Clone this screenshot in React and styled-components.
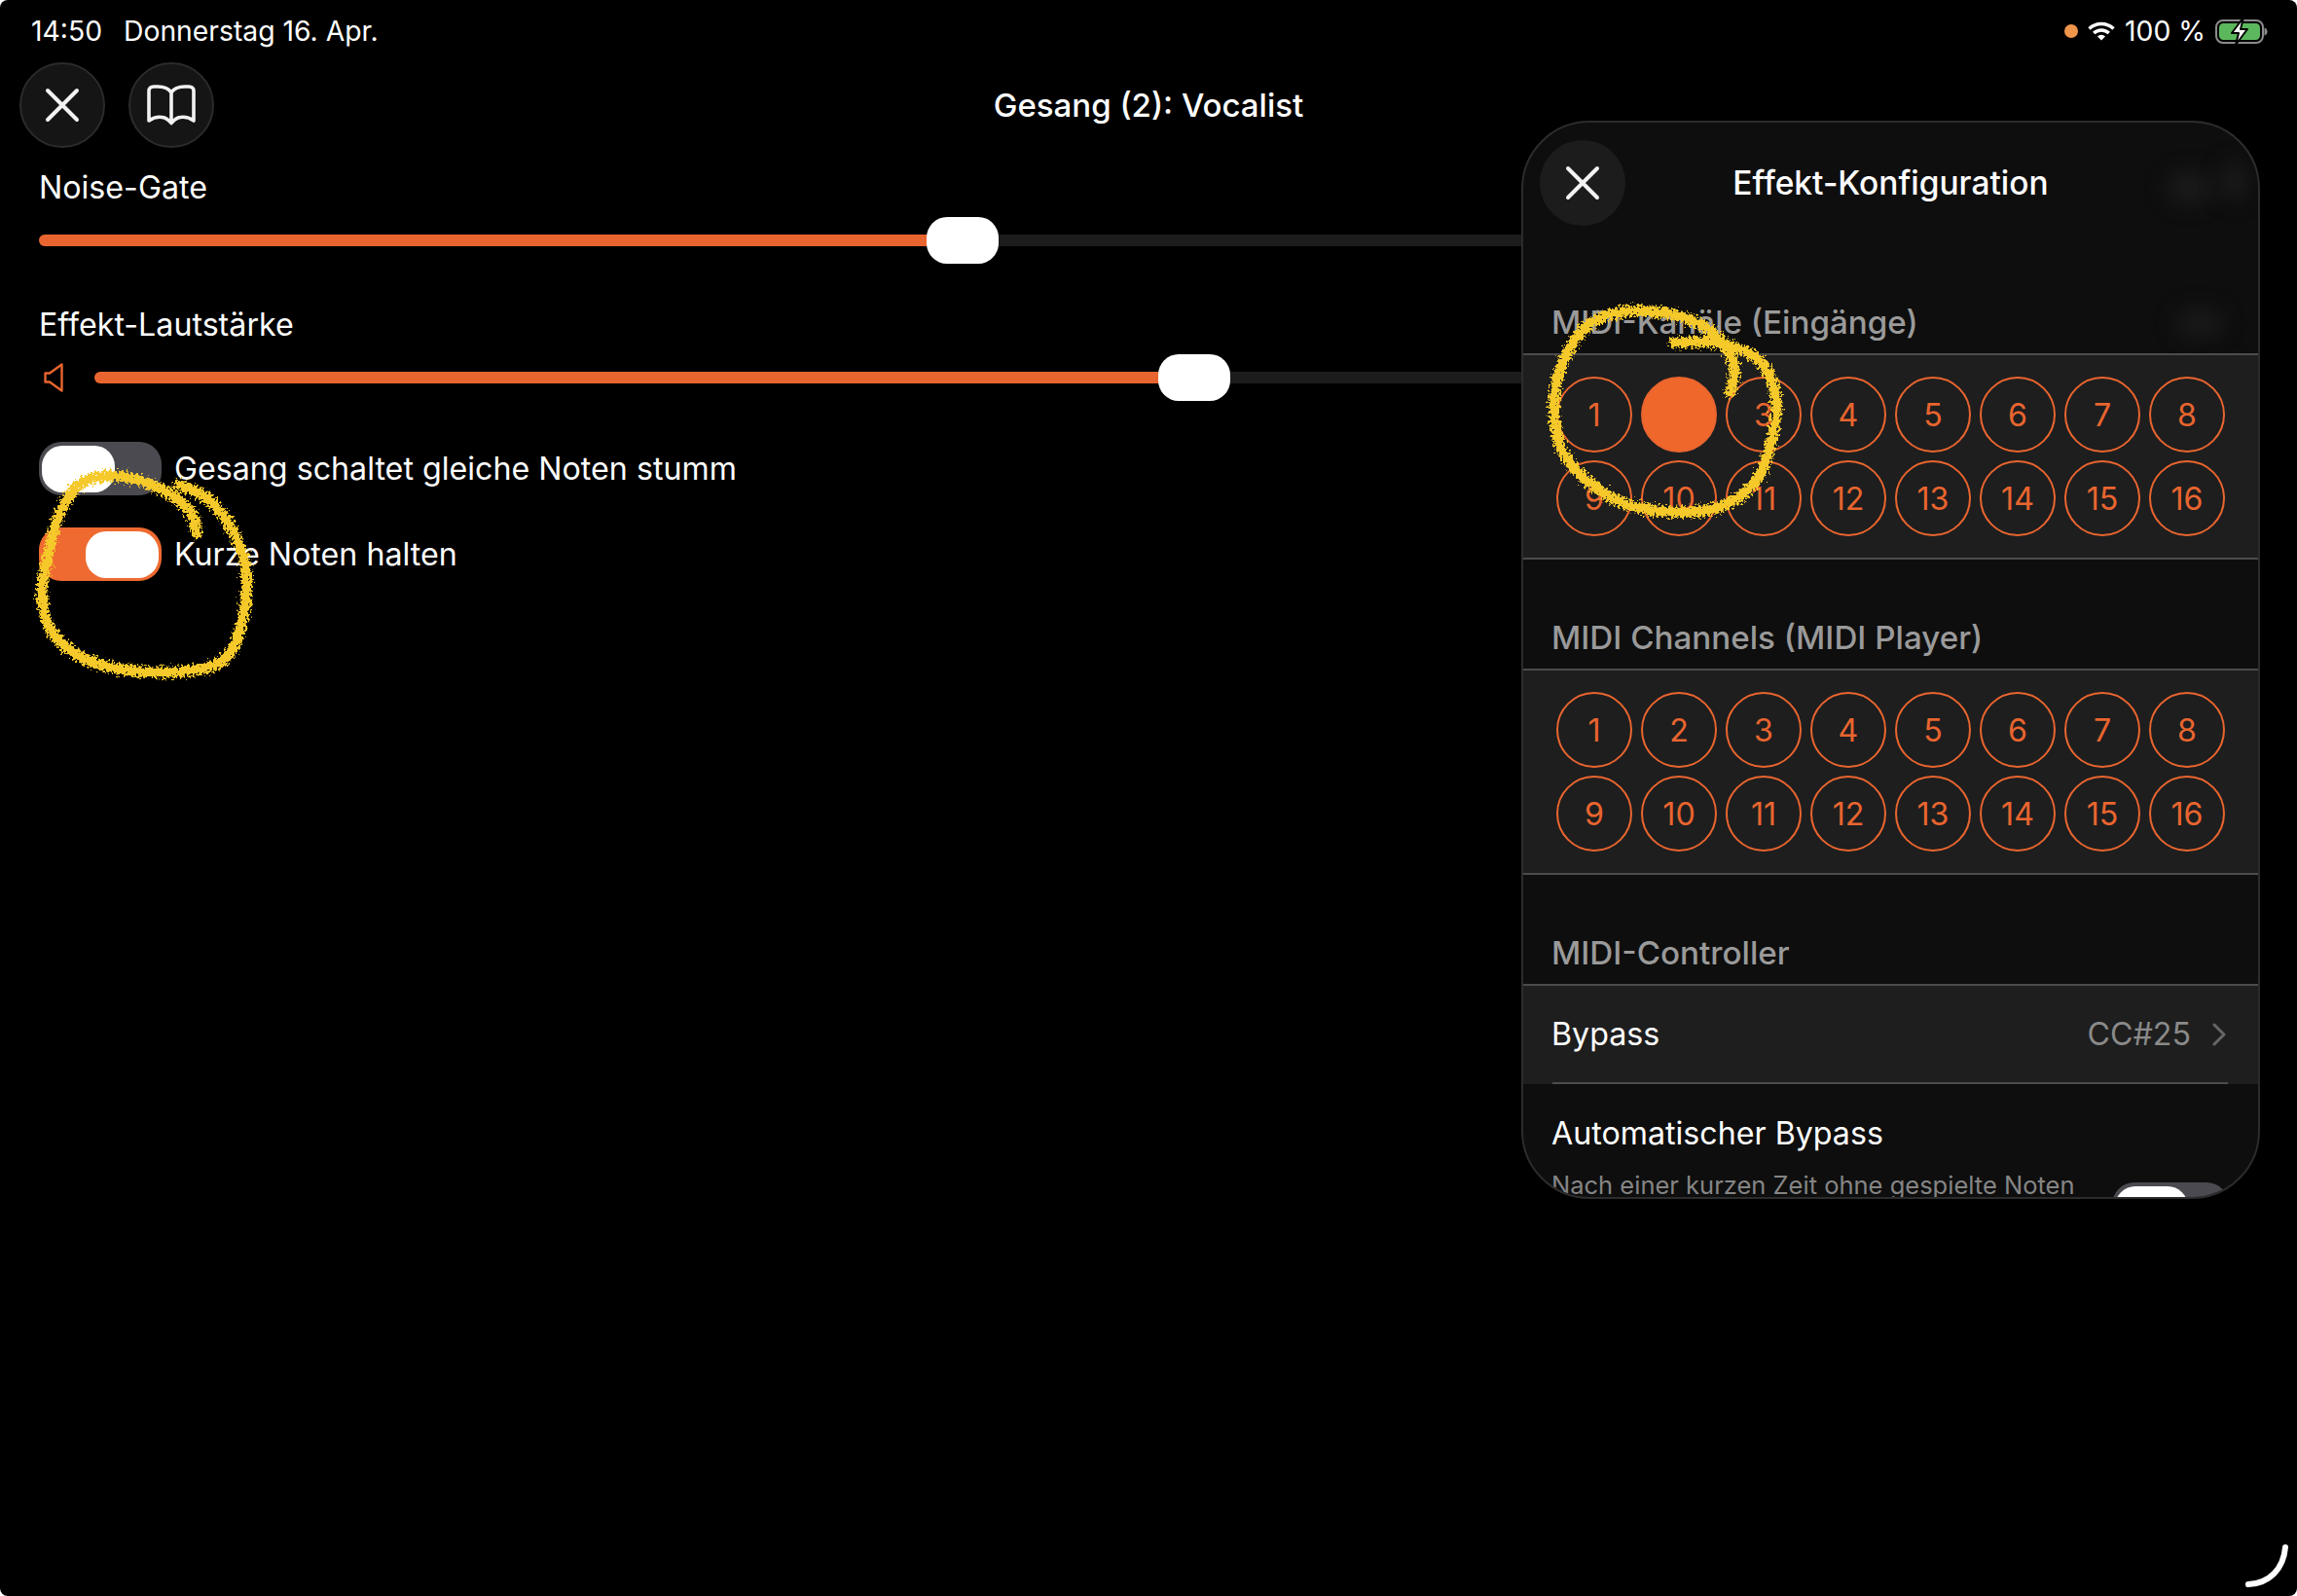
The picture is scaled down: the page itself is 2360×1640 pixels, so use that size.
import React from 'react';
import styled, { createGlobalStyle } from 'styled-components';

const ORANGE = '#e9652f';

const GlobalStyle = createGlobalStyle`
	html, body {
		margin: 0;
		padding: 0;
		background: #fff;
	}
	* {
		box-sizing: border-box;
	}
`;

const Page = styled.div`
	position: relative;
	width: 2360px;
	height: 1640px;
	overflow: hidden;
	background: #000;
	border-radius: 8px;
	color: #fff;
	font-family: Inter, "Noto Sans", "Liberation Sans", sans-serif;
	font-size: 32.2px;
`;

const StatusBar = styled.div`
	display: flex;
	align-items: center;
	justify-content: space-between;
	height: 64px;
	padding: 0 30px 0 32px;
	font-size: 28.3px;
`;

const StatusGroup = styled.div`
	display: flex;
	align-items: center;
	gap: ${p => p.$gap}px;
`;

const Dot = styled.div`
	width: 14px;
	height: 14px;
	border-radius: 50%;
	background: #f0964a;
`;

const NavBar = styled.div`
	display: grid;
	grid-template-columns: 1fr auto 1fr;
	align-items: center;
	height: 88px;
	padding: 0 20px;
`;

const NavButtons = styled.div`
	display: flex;
	gap: 24px;
`;

const RoundButton = styled.div`
	display: flex;
	align-items: center;
	justify-content: center;
	width: 88px;
	height: 88px;
	border-radius: 50%;
	background: ${p => p.$flat ? '#1c1c1c' : '#151515'};
	border: ${p => p.$flat ? 'none' : '2px solid #2b2b2b'};
`;

const Title = styled.div`
	font-weight: 500;
	font-size: 33px;
	line-height: 40px;
`;

const Content = styled.div`
	padding: 21px 40px 0;
`;

const Label = styled.div`
	height: 40px;
	line-height: 40px;
`;

const SliderRow = styled.div`
	display: flex;
	align-items: center;
	height: 48px;
	margin-top: 10px;
	margin-bottom: 43px;
`;

const SpeakerBox = styled.div`
	display: flex;
	align-items: center;
	width: 57px;
	padding-left: 5px;
`;

const Track = styled.div`
	flex: 1;
	height: 12px;
	border-radius: 6px;
	background: #1c1c1c;
`;

const Fill = styled.div`
	position: relative;
	width: ${p => p.$width}px;
	height: 12px;
	border-radius: 6px 0 0 6px;
	background: ${ORANGE};
`;

const Thumb = styled.div`
	position: absolute;
	top: -18px;
	right: -37px;
	width: 74px;
	height: 48px;
	border-radius: 21px;
	background: #fff;
`;

const ToggleList = styled.div`
	display: flex;
	flex-direction: column;
	gap: 33px;
	margin-top: -1px;
`;

const ToggleRow = styled.div`
	display: flex;
	align-items: center;
	gap: 13px;
`;

const Toggle = styled.div`
	display: flex;
	justify-content: ${p => p.$on ? 'flex-end' : 'flex-start'};
	align-items: center;
	flex-shrink: 0;
	width: 126px;
	height: 55px;
	padding: 0 3px;
	border-radius: 23px;
	background: ${p => p.$on ? '#ee6a30' : '#4a4a50'};
`;

const ToggleKnob = styled.div`
	width: 75px;
	height: 48px;
	border-radius: 21px;
	background: #fff;
`;

const Panel = styled.div`
	position: absolute;
	left: 1563px;
	top: 124px;
	width: 759px;
	height: 1108px;
	overflow: hidden;
	background: #0e0e0e;
	border: 2px solid #2c2c2c;
	border-radius: 70px;
`;

const Blob = styled.div`
	position: absolute;
	left: ${p => p.$x}px;
	top: ${p => p.$y}px;
	width: ${p => p.$w}px;
	height: ${p => p.$h}px;
	border-radius: 50%;
	background: ${p => p.$color};
	filter: blur(10px);
`;

const PanelHeader = styled.div`
	position: relative;
	display: flex;
	align-items: center;
	justify-content: center;
	height: 88px;
	margin: 18px 0 19px;
	font-size: 33.5px;
	font-weight: 500;
`;

const PanelClose = styled.div`
	position: absolute;
	left: 17px;
	top: 0;
`;

const SectionLabel = styled.div`
	height: 112px;
	padding: 60px 0 0 29px;
	line-height: 40px;
	font-size: 33.2px;
	font-weight: 500;
	color: #9a9a9a;
`;

const Card = styled.div`
	position: relative;
	background: #1e1e1e;
	border-top: 2px solid #4c4c4c;
	border-bottom: 2px solid ${p => p.$inset ? 'transparent' : '#4c4c4c'};
`;

const ChannelGrid = styled.div`
	display: grid;
	grid-template-columns: repeat(8, 78px);
	grid-auto-rows: 78px;
	justify-content: center;
	column-gap: 9px;
	row-gap: 8px;
	padding: 22px 0;
`;

const Channel = styled.div`
	display: flex;
	align-items: center;
	justify-content: center;
	border-radius: 50%;
	border: 2px solid ${ORANGE};
	background: ${p => p.$active ? '#f0672c' : 'transparent'};
	color: ${ORANGE};
`;

const BypassRow = styled.div`
	display: flex;
	align-items: center;
	justify-content: space-between;
	height: 99px;
	padding: 0 33px 0 29px;
`;

const BypassValue = styled.div`
	display: flex;
	align-items: center;
	gap: 22px;
	color: #8a8a8a;
`;

const InsetLine = styled.div`
	position: absolute;
	left: 30px;
	right: 31px;
	bottom: -2px;
	height: 2px;
	background: #4c4c4c;
`;

const AutoRow = styled.div`
	display: flex;
	align-items: flex-start;
	justify-content: space-between;
	padding: 31px 30px 0 29px;
`;

const AutoText = styled.div`
	display: flex;
	flex-direction: column;
	gap: 17px;
`;

const AutoHint = styled.div`
	font-size: 25.5px;
	line-height: 34px;
	color: #858585;
`;

const AutoToggle = styled(Toggle)`
	width: 120px;
	margin-top: 70px;
`;

const Overlay = styled.svg`
	position: absolute;
	left: 0;
	top: 0;
	pointer-events: none;
`;

const CloseIcon = () => (
	<svg width="36" height="36" viewBox="0 0 36 36" fill="none" stroke="#f2f2f2" strokeWidth="4" strokeLinecap="round">
		<path d="M3 3L33 33M33 3L3 33" />
	</svg>
);

const BookIcon = () => (
	<svg width="50" height="42" viewBox="0 0 50 42" fill="none" stroke="#f2f2f2" strokeWidth="3.6" strokeLinecap="round" strokeLinejoin="round">
		<path d="M25 8C22 3.5 17 2 11 2H7C4 2 2 3.5 2 6.5V37C7 33.5 13 32.5 18 34C21 35 23 37 25 39.5C27 37 29 35 32 34C37 32.5 43 33.5 48 37V6.5C48 3.5 46 2 43 2H39C33 2 28 3.5 25 8V39" />
	</svg>
);

const SpeakerIcon = () => (
	<svg width="20" height="30" viewBox="0 0 20 30" fill="none" stroke={ORANGE} strokeWidth="2.4" strokeLinejoin="round">
		<path d="M18.5 1.5L6 10.5H1.5V19.5H6L18.5 28.5Z" />
	</svg>
);

const WifiIcon = () => (
	<svg width="28" height="20" viewBox="0 0 28 20" fill="none" stroke="#fff" strokeWidth="3.4">
		<path d="M1.5 7.5A18 18 0 0 1 26.5 7.5" />
		<path d="M6.2 12A11.5 11.5 0 0 1 21.8 12" />
		<path d="M14 19.5L10 15.5A5.6 5.6 0 0 1 18 15.5Z" fill="#fff" stroke="none" />
	</svg>
);

const BatteryIcon = () => (
	<svg width="54" height="30" viewBox="0 0 54 30" fill="none">
		<rect x="1" y="4" width="48" height="23" rx="7" stroke="#8c8c8c" strokeWidth="2" />
		<rect x="4" y="7" width="42" height="17" rx="4.5" fill="#5cb85c" />
		<path d="M50.5 11.5C52.5 12 53.5 13.5 53.5 15.5C53.5 17.5 52.5 19 50.5 19.5Z" fill="#8c8c8c" />
		<path d="M29 1L17 17H24L21 29L33 13H26Z" fill="#fff" stroke="#000" strokeWidth="2" strokeLinejoin="round" />
	</svg>
);

const ChevronIcon = () => (
	<svg width="14" height="24" viewBox="0 0 14 24" fill="none" stroke="#666" strokeWidth="3" strokeLinecap="round" strokeLinejoin="round">
		<path d="M2 2L12 12L2 22" />
	</svg>
);

// smooth line through hand-picked points (catmull-rom)
const smooth = (pts) => {
	let d = `M${pts[0][0]} ${pts[0][1]}`;
	for (let i = 0; i < pts.length - 1; i++) {
		const p0 = pts[i - 1] || pts[i];
		const p1 = pts[i];
		const p2 = pts[i + 1];
		const p3 = pts[i + 2] || p2;
		const c1 = [p1[0] + (p2[0] - p0[0]) / 6, p1[1] + (p2[1] - p0[1]) / 6];
		const c2 = [p2[0] - (p3[0] - p1[0]) / 6, p2[1] - (p3[1] - p1[1]) / 6];
		d += `C${c1[0]} ${c1[1]} ${c2[0]} ${c2[1]} ${p2[0]} ${p2[1]}`;
	}
	return d;
};

const SCRIBBLE_TOGGLE = [[202, 548], [196, 527], [173, 507], [138, 492], [102, 490], [77, 502], [59, 533], [48, 577], [43, 613], [54, 650], [87, 677], [143, 690], [204, 688], [235, 673], [250, 633], [253, 587], [240, 547], [214, 513], [184, 498]];
const SCRIBBLE_CHANNEL = [[1778, 403], [1782, 377], [1770, 353], [1750, 335], [1717, 323], [1670, 320], [1633, 333], [1610, 363], [1598, 400], [1598, 437], [1607, 467], [1630, 493], [1663, 515], [1703, 525], [1750, 525], [1783, 513], [1807, 490], [1820, 453], [1825, 413], [1817, 383], [1797, 363], [1760, 352], [1720, 352]];

const Scribbles = () => (
	<Overlay width="2360" height="1640" viewBox="0 0 2360 1640" fill="none">
		<defs>
			<filter id="rough" x="0" y="0" width="2360" height="1640" filterUnits="userSpaceOnUse" colorInterpolationFilters="sRGB">
				<feTurbulence type="fractalNoise" baseFrequency="0.4" numOctaves="2" seed="4" />
				<feDisplacementMap in="SourceGraphic" scale="14" xChannelSelector="R" yChannelSelector="G" />
			</filter>
		</defs>
		<g filter="url(#rough)" stroke="#f5c92a" strokeWidth="11" strokeLinecap="round" strokeLinejoin="round">
			<path d={smooth(SCRIBBLE_TOGGLE)} />
			<path d={smooth(SCRIBBLE_CHANNEL)} />
		</g>
		<path d="M2348 1590C2346 1612 2332 1627 2310 1628" stroke="#fff" strokeWidth="6" strokeLinecap="round" />
	</Overlay>
);

const Slider = ({ fill, icon }) => (
	<SliderRow>
		{icon && <SpeakerBox><SpeakerIcon /></SpeakerBox>}
		<Track>
			<Fill $width={fill}><Thumb /></Fill>
		</Track>
	</SliderRow>
);

const Channels = ({ active }) => (
	<Card>
		<ChannelGrid>
			{Array.from({ length: 16 }, (_, i) => i + 1).map(n => (
				<Channel key={n} $active={n === active}>{n === active ? '' : n}</Channel>
			))}
		</ChannelGrid>
	</Card>
);

export default function App() {
	return (
		<Page>
			<GlobalStyle />
			<StatusBar>
				<StatusGroup $gap={22}>
					<span>14:50</span>
					<span>Donnerstag 16. Apr.</span>
				</StatusGroup>
				<StatusGroup $gap={10}>
					<Dot />
					<WifiIcon />
					<span>100 %</span>
					<BatteryIcon />
				</StatusGroup>
			</StatusBar>
			<NavBar>
				<NavButtons>
					<RoundButton><CloseIcon /></RoundButton>
					<RoundButton><BookIcon /></RoundButton>
				</NavButtons>
				<Title>Gesang (2): Vocalist</Title>
			</NavBar>
			<Content>
				<Label>Noise-Gate</Label>
				<Slider fill={949} />
				<Label>Effekt-Lautstärke</Label>
				<Slider fill={1130} icon />
				<ToggleList>
					<ToggleRow>
						<Toggle><ToggleKnob /></Toggle>
						Gesang schaltet gleiche Noten stumm
					</ToggleRow>
					<ToggleRow>
						<Toggle $on><ToggleKnob /></Toggle>
						Kurze Noten halten
					</ToggleRow>
				</ToggleList>
			</Content>
			<Panel>
				<Blob $x={660} $y={50} $w={50} $h={34} $color="#1a1a1a" />
				<Blob $x={715} $y={40} $w={30} $h={40} $color="#1a1a1a" />
				<Blob $x={670} $y={190} $w={50} $h={32} $color="#191919" />
				<Blob $x={700} $y={250} $w={40} $h={40} $color="#2e1d14" />
				<PanelHeader>
					<PanelClose><RoundButton $flat><CloseIcon /></RoundButton></PanelClose>
					Effekt-Konfiguration
				</PanelHeader>
				<SectionLabel>MIDI-Kanäle (Eingänge)</SectionLabel>
				<Channels active={2} />
				<SectionLabel>MIDI Channels (MIDI Player)</SectionLabel>
				<Channels />
				<SectionLabel>MIDI-Controller</SectionLabel>
				<Card $inset>
					<BypassRow>
						Bypass
						<BypassValue>CC#25<ChevronIcon /></BypassValue>
					</BypassRow>
					<InsetLine />
				</Card>
				<AutoRow>
					<AutoText>
						Automatischer Bypass
						<AutoHint>Nach einer kurzen Zeit ohne gespielte Noten</AutoHint>
					</AutoText>
					<AutoToggle><ToggleKnob /></AutoToggle>
				</AutoRow>
			</Panel>
			<Scribbles />
		</Page>
	);
}
